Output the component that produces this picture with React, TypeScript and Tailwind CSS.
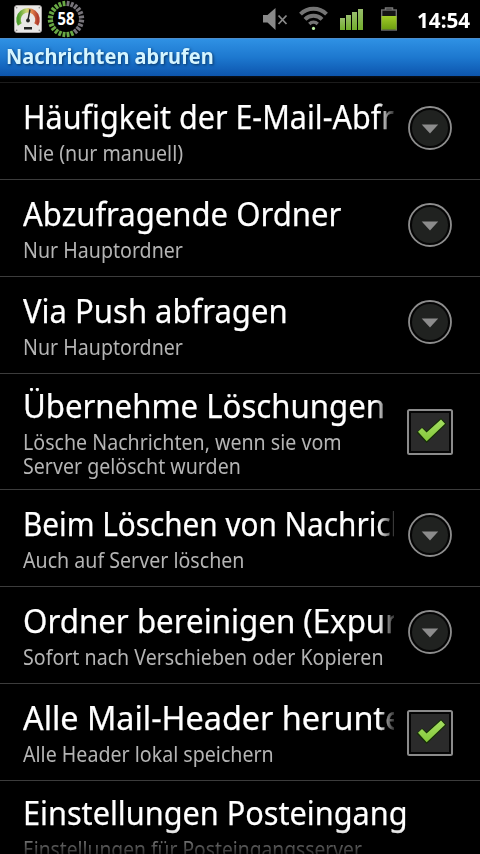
import React from 'react';

type Widget = 'menu' | 'check' | 'none';

interface Preference {
  title: string;
  titleClass: string;
  summary: string[];
  summaryClass?: string;
  widget: Widget;
  fade?: string;
}

const FADE = '[mask-image:linear-gradient(to_right,#000_355px,transparent_375px)]';
const FADE_SHORT = '[mask-image:linear-gradient(to_right,#000_352px,transparent_370px)]';

const PREFERENCES: Preference[] = [
  { title: 'Häufigkeit der E-Mail-Abfrage', titleClass: 'scale-x-[0.924]', summary: ['Nie (nur manuell)'], widget: 'menu', fade: FADE },
  { title: 'Abzufragende Ordner', titleClass: 'scale-x-[0.941]', summary: ['Nur Hauptordner'], widget: 'menu' },
  { title: 'Via Push abfragen', titleClass: 'scale-x-[0.94]', summary: ['Nur Hauptordner'], widget: 'menu' },
  { title: 'Übernehme Löschungen', titleClass: 'scale-x-[0.944]', summary: ['Lösche Nachrichten, wenn sie vom', 'Server gelöscht wurden'], widget: 'check', fade: FADE_SHORT },
  { title: 'Beim Löschen von Nachrichten', titleClass: 'scale-x-[0.9]', summary: ['Auch auf Server löschen'], widget: 'menu', fade: FADE },
  { title: 'Ordner bereinigen (Expunge)', titleClass: 'scale-x-[0.947]', summary: ['Sofort nach Verschieben oder Kopieren'], widget: 'menu', fade: FADE },
  { title: 'Alle Mail-Header herunterladen', titleClass: 'scale-x-[0.98]', summary: ['Alle Header lokal speichern'], widget: 'check', fade: FADE },
  { title: 'Einstellungen Posteingang', titleClass: 'scale-x-[0.929]', summary: ['Einstellungen für Posteingangsserver'], summaryClass: 'scale-x-[0.917]', widget: 'none' },
];

const MenuIcon = () => (
  <svg className="w-[46px] h-[46px]" viewBox="0 0 46 46">
    <circle cx="23" cy="23" r="21" fill="#050505" stroke="#8d8d8d" strokeWidth="1.8" />
    <circle cx="23" cy="23" r="18" fill="#202220" />
    <path d="M14.700 19.500h16.500l-8.200 9z" fill="#8c8c8c" />
  </svg>
);

const CheckIcon = () => (
  <svg className="w-[46px] h-[46px]" viewBox="0 0 46 46">
    <rect x="1" y="1" width="44" height="44" rx="1.5" fill="#050505" stroke="#8b8b8b" strokeWidth="2" />
    <rect x="4" y="4" width="38" height="38" fill="#2b2b2b" />
    <path d="M11 23.500l4.200-4 4.300 4L34 10.500l4 4.500L19.700 32.500z" fill="#163006" stroke="#163006" strokeWidth="2" />
    <path d="M11 22.800l4-3.800 4.600 4.500L34 10.500l4 4.300L19.700 32.300z" fill="url(#tick)" />
    <defs>
      <linearGradient id="tick" x1="0" y1="0" x2="0" y2="1">
        <stop offset="0" stopColor="#a5de62" />
        <stop offset="1" stopColor="#85c83a" />
      </linearGradient>
    </defs>
  </svg>
);

const GaugeIcon = () => (
  <svg className="w-[28px] h-[28px]" viewBox="0 0 28 28">
    <defs>
      <linearGradient id="gauge" x1="0" y1="0" x2="1" y2="0">
        <stop offset="0" stopColor="#4d9e2c" />
        <stop offset="0.45" stopColor="#d3da7a" />
        <stop offset="0.7" stopColor="#e2834c" />
        <stop offset="1" stopColor="#b3402f" />
      </linearGradient>
    </defs>
    <rect x="0.500" y="0.500" width="27" height="27" rx="2.500" fill="#e9e7e6" stroke="#aaa6a6" />
    <path d="M5.800 19.500a9.500 9.500 0 1 1 16.400 0" fill="none" stroke="url(#gauge)" strokeWidth="4.500" />
    <path d="M14 15l2-10.500" stroke="#222" strokeWidth="1.400" />
    <circle cx="14" cy="15.500" r="1.900" fill="#222" />
    <rect x="10" y="22" width="8" height="2.500" fill="#222" />
    <circle cx="2.700" cy="2.700" r="0.800" fill="#888" />
    <circle cx="25.300" cy="2.700" r="0.800" fill="#888" />
    <circle cx="2.700" cy="25.300" r="0.800" fill="#888" />
    <circle cx="25.300" cy="25.300" r="0.800" fill="#888" />
  </svg>
);

// 24 ticks, the first part of the ring (clockwise from the top) is used up
const BatteryRing = () => (
  <svg className="w-[38px] h-[38px]" viewBox="0 0 38 38">
    {Array.from({ length: 24 }, (_, i) => (
      <rect
        key={i}
        x="17.600"
        y="0.800"
        width="2.800"
        height="5.200"
        fill={i < 10 ? '#77747a' : '#69a945'}
        transform={`rotate(${i * 15 + 7.5} 19 19)`}
      />
    ))}
    <text x="19" y="25" textAnchor="middle" textLength="17" lengthAdjust="spacingAndGlyphs" fill="#fff" fontFamily="'Noto Sans', sans-serif" fontWeight="700" fontSize="17">58</text>
  </svg>
);

const StatusIcons = () => (
  <svg className="w-[140px] h-[38px]" viewBox="260 0 140 38">
    <defs>
      <linearGradient id="bars" x1="0" y1="0" x2="0" y2="1">
        <stop offset="0" stopColor="#98bd6c" />
        <stop offset="1" stopColor="#72ad2b" />
      </linearGradient>
      <linearGradient id="level" x1="0" y1="0" x2="0" y2="1">
        <stop offset="0" stopColor="#a0cc28" />
        <stop offset="1" stopColor="#6d9e10" />
      </linearGradient>
    </defs>
    <path d="M263 15h4.500l8-7v22l-8-7.500H263z" fill="#898989" />
    <path d="M278.500 15.500l8 8.500M286.500 15.500l-8 8.500" stroke="#898989" strokeWidth="1.800" />
    <g fill="none" stroke="#747474" strokeWidth="4">
      <path d="M300.500 14.200a18.500 18.500 0 0 1 26 0" />
      <path d="M305 19.300a12 12 0 0 1 17 0" />
      <path d="M309.300 24a6 6 0 0 1 8.400 0" strokeWidth="3.400" />
    </g>
    <circle cx="313.500" cy="28.400" r="1.600" fill="#b9eda0" />
    <g fill="url(#bars)">
      <rect x="340" y="18" width="5" height="12" />
      <rect x="346" y="15" width="5" height="15" />
      <rect x="352" y="12" width="5" height="18" />
      <rect x="358" y="9" width="5" height="21" />
    </g>
    <path d="M385.500 10V8h7v2" fill="none" stroke="#777" strokeWidth="1.500" />
    <rect x="381.700" y="10" width="14.600" height="20" fill="#151515" stroke="#707070" strokeWidth="1.400" />
    <rect x="381.500" y="16" width="15" height="13.500" fill="url(#level)" />
  </svg>
);

const PreferenceRow: React.FC<{ item: Preference }> = ({ item }) => {
  const hasWidget = item.widget !== 'none';
  const isTall = item.summary.length > 1 || !hasWidget;

  return (
    <li className={`flex pl-[23px] border-b border-[#3c3c3c] ${isTall ? 'h-[116px] pt-[14px]' : 'h-[97px] pt-4'}`}>
      <div className={`shrink-0 overflow-x-clip whitespace-nowrap ${hasWidget ? 'w-[371px]' : 'w-[440px]'}`}>
        <h2 className={`h-[42px] leading-[36px] text-[33px] text-white [-webkit-text-stroke:0.25px_#fff] ${item.fade ?? ''}`}>
          <span className={`inline-block origin-left ${item.titleClass}`}>{item.title}</span>
        </h2>
        {item.summary.map(line => (
          <p key={line} className="h-6 leading-6 text-[21px] text-[#b4b4b4]">
            <span className={`inline-block origin-left ${item.summaryClass ?? 'scale-x-[0.934]'}`}>{line}</span>
          </p>
        ))}
      </div>
      {item.widget === 'menu' && <div className="ml-[13px] mt-[6px]"><MenuIcon /></div>}
      {item.widget === 'check' && <div className={`ml-[13px] ${isTall ? 'mt-[21px]' : 'mt-[10px]'}`}><CheckIcon /></div>}
    </li>
  );
};

const App: React.FC = () => (
  <div className="w-[480px] h-[854px] overflow-hidden bg-black flex flex-col font-['Noto_Sans',sans-serif]">
    <header className="h-[38px] shrink-0 flex items-center pl-[14px] pr-[10px]">
      <GaugeIcon />
      <div className="ml-[5px]"><BatteryRing /></div>
      <div className="ml-auto"><StatusIcons /></div>
      <div className="w-[53px] ml-[17px] text-[22px] leading-[38px] font-bold text-white">
        <span className="inline-block origin-left scale-x-[0.94]">14:54</span>
      </div>
    </header>

    <div className="h-[38px] shrink-0 pl-[6px] bg-linear-to-b from-[#2f91e4] via-[#1d78cf] to-[#0d55ae] border-t border-[#4d8dcb]">
      <h1 className="text-[21px] leading-[35px] font-bold text-[#d5f5ff] whitespace-nowrap [text-shadow:1px_1px_3px_#06305f]">
        <span className="inline-block origin-left scale-x-[0.952]">Nachrichten abrufen</span>
      </h1>
    </div>
    <div className="h-[7px] shrink-0 bg-linear-to-b from-[#08101c] to-black border-b border-[#1c1c1c]"></div>

    <main className="flex-1 min-h-0 overflow-hidden [mask-image:linear-gradient(to_bottom,#000_745px,rgba(0,0,0,0.25)_771px)]">
      <ul>
        {PREFERENCES.map(item => (
          <PreferenceRow key={item.title} item={item} />
        ))}
      </ul>
    </main>
  </div>
);

export default App;
